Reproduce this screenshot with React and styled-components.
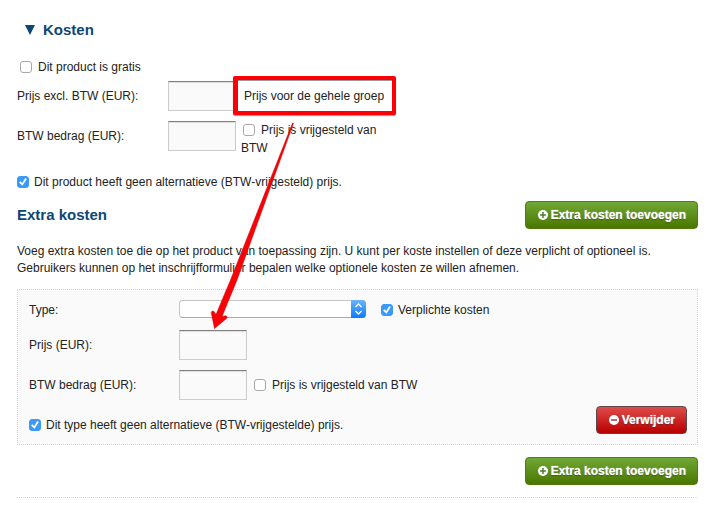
import React from "react";
import styled, { createGlobalStyle } from "styled-components";

const GlobalStyle = createGlobalStyle`
  * {
    box-sizing: border-box;
  }

  body {
    margin: 0;
    background-color: #ffffff;
    color: #222222;
    font-family: "Liberation Sans", Arial, sans-serif;
    font-size: 12px;
    line-height: 18px;
  }
`;

const Page = styled.main`
  position: relative;
  padding: 20px 29px 0 17px;
`;

const Title = styled.h2`
  display: flex;
  align-items: center;
  gap: 8px;
  margin: 0 0 18px;
  padding-left: 8px;
  color: #0d4775;
  font-size: 15px;
  line-height: 20px;
`;

const Subtitle = styled(Title)`
  margin: 0;
  padding-left: 0;
`;

const Rows = styled.div`
  display: flex;
  flex-direction: column;
  gap: 10px;
  padding: ${(props) => (props.$inset ? "10px 0 6px" : "5px 0 16px")};
`;

const Row = styled.div`
  position: relative;
  display: flex;
  align-items: flex-start;
`;

const RowLabel = styled.label`
  flex: none;
  width: ${(props) => (props.$inset ? "150px" : "151px")};
  line-height: ${(props) => (props.$short ? "20px" : "30px")};
`;

const PriceInput = styled.input`
  flex: none;
  width: 68px;
  height: 30px;
  padding: 4px;
  background-color: #fafafa;
  border: 1px solid #cccccc;
  border-top-color: #808080;
  border-radius: 0;
  box-shadow: inset 0 1px 1px #dddddd;
  font: inherit;
`;

const Check = styled.input`
  appearance: none;
  position: relative;
  flex: none;
  width: 12px;
  height: 12px;
  margin: 0;
  background-color: #ffffff;
  border: 1px solid #a9a9a9;
  border-radius: 3px;
  vertical-align: -2px;

  &:checked {
    background-color: #3b99fc;
    border-color: #3b99fc;
  }

  &:checked::after {
    content: "";
    position: absolute;
    inset: 1px;
    background-color: #ffffff;
    clip-path: polygon(0 55%, 18% 40%, 40% 64%, 78% 0, 98% 14%, 44% 98%);
  }
`;

const CheckLabel = styled.label`
  display: flex;
  align-items: center;
  gap: ${(props) => (props.$wide ? "6px" : "5px")};
`;

const CheckRow = styled(CheckLabel)`
  padding: ${(props) => (props.$indent ? "0 3px" : "0")};
`;

const WrapLabel = styled.label`
  width: 160px;
  margin-left: 5px;

  ${Check} {
    margin: 0 6px 0 2px;
  }
`;

const InlineCheck = styled(CheckLabel)`
  height: ${(props) => (props.$short ? "20px" : "30px")};
  margin-left: ${(props) => (props.$short ? "15px" : "7px")};
`;

const Highlight = styled.div`
  position: absolute;
  top: -5px;
  left: 216px;
  padding: 8px 8px 7px 6px;
  background-color: #ffffff;
  border: 4px solid #fb0007;
  border-left-width: 5px;
  border-radius: 2px;
  box-shadow: inset 0 1px 0 #999999, 0 1px 1px #999999;
  line-height: 16px;
  white-space: nowrap;
`;

const Bar = styled.div`
  display: flex;
  justify-content: ${(props) => (props.$end ? "flex-end" : "space-between")};
  align-items: center;
  padding: ${(props) => (props.$end ? "12px 0" : "10px 0 14px")};
`;

const Button = styled.button`
  display: flex;
  align-items: center;
  gap: 3px;
  height: 28px;
  padding: 0 11px 0 12px;
  background: linear-gradient(#71a836, #4a7600);
  border: 1px solid #4f7d08;
  border-radius: 4px;
  color: #ffffff;
  cursor: pointer;
  font: bold 12px "Liberation Sans", Arial, sans-serif;
  text-shadow: 0 1px 1px rgba(0, 0, 0, 0.4), 0 0 1px #ffffff;
  white-space: nowrap;
`;

const DeleteButton = styled(Button)`
  background: linear-gradient(#df4b4b, #b80000);
  border-color: #5a4848;
`;

const Intro = styled.p`
  margin: 0;
  line-height: 17px;
`;

const Panel = styled.section`
  margin-top: 12px;
  padding: 10px 10px 10px 11px;
  background-color: #fafafa;
  border: 1px dotted #ccd6dd;
`;

const PanelFooter = styled.div`
  display: flex;
  justify-content: space-between;
  align-items: flex-end;

  ${CheckLabel} {
    height: 18px;
  }
`;

const SelectWrap = styled.div`
  position: relative;
  flex: none;
  width: 187px;
  height: 18px;
`;

const Select = styled.select`
  appearance: none;
  display: block;
  width: 100%;
  height: 100%;
  padding: 0 20px 0 6px;
  background-color: #ffffff;
  border: 1px solid #c6c6c6;
  border-bottom-color: #a9a9a9;
  border-radius: 4px;
  font: inherit;
`;

const SelectArrows = styled.svg`
  position: absolute;
  top: 0;
  right: 0;
  width: 15px;
  height: 18px;
  background: linear-gradient(#6bb3fa, #0a7bff);
  border-radius: 0 4px 4px 0;
  pointer-events: none;
`;

const Divider = styled.hr`
  margin: 0;
  border: 0;
  border-top: 1px dotted #ccd6dd;
`;

const Arrow = styled.svg`
  position: absolute;
  top: 122px;
  left: 208px;
  width: 90px;
  height: 210px;
  pointer-events: none;
`;

const Triangle = () => (
  <svg width="10" height="10" viewBox="0 0 10 10" fill="#0d4775">
    <path d="M0 0h10L5 10z" />
  </svg>
);

const CircleIcon = ({ minus }) => (
  <svg width="10" height="12" viewBox="0 0 10 12">
    <circle cx="5" cy="6" r="5" fill="#ffffff" />
    <path
      d={minus ? "M2 6h6" : "M2 6h6M5 3v6"}
      stroke={minus ? "#a83a48" : "#4d7f2e"}
      strokeWidth="1.5"
    />
  </svg>
);

const AddButton = () => (
  <Button type="button">
    <CircleIcon />
    Extra kosten toevoegen
  </Button>
);

const ExtraCost = () => (
  <Panel>
    <Row>
      <RowLabel htmlFor="type" $inset $short>
        Type:
      </RowLabel>
      <SelectWrap>
        <Select id="type" />
        <SelectArrows viewBox="0 0 15 18">
          <path
            d="M4.5 7l3-3 3 3M4.5 11l3 3 3-3"
            fill="none"
            stroke="#ffffff"
            strokeWidth="1.4"
          />
        </SelectArrows>
      </SelectWrap>
      <InlineCheck $short>
        <Check type="checkbox" defaultChecked />
        Verplichte kosten
      </InlineCheck>
    </Row>
    <Rows $inset>
      <Row>
        <RowLabel htmlFor="extra-price" $inset>
          Prijs (EUR):
        </RowLabel>
        <PriceInput id="extra-price" type="text" />
      </Row>
      <Row>
        <RowLabel htmlFor="extra-vat" $inset>
          BTW bedrag (EUR):
        </RowLabel>
        <PriceInput id="extra-vat" type="text" />
        <InlineCheck $wide>
          <Check type="checkbox" />
          Prijs is vrijgesteld van BTW
        </InlineCheck>
      </Row>
    </Rows>
    <PanelFooter>
      <CheckLabel>
        <Check type="checkbox" defaultChecked />
        Dit type heeft geen alternatieve (BTW-vrijgestelde) prijs.
      </CheckLabel>
      <DeleteButton type="button">
        <CircleIcon minus />
        Verwijder
      </DeleteButton>
    </PanelFooter>
  </Panel>
);

const App = () => {
  return (
    <>
      <GlobalStyle />
      <Page>
        <Title>
          <Triangle />
          Kosten
        </Title>
        <CheckRow $indent $wide>
          <Check type="checkbox" />
          Dit product is gratis
        </CheckRow>
        <Rows>
          <Row>
            <RowLabel htmlFor="price">Prijs excl. BTW (EUR):</RowLabel>
            <PriceInput id="price" type="text" />
            <Highlight>Prijs voor de gehele groep</Highlight>
          </Row>
          <Row>
            <RowLabel htmlFor="vat">BTW bedrag (EUR):</RowLabel>
            <PriceInput id="vat" type="text" />
            <WrapLabel>
              <Check type="checkbox" />
              Prijs is vrijgesteld van BTW
            </WrapLabel>
          </Row>
        </Rows>
        <CheckRow>
          <Check type="checkbox" defaultChecked />
          Dit product heeft geen alternatieve (BTW-vrijgesteld) prijs.
        </CheckRow>
        <Bar>
          <Subtitle>Extra kosten</Subtitle>
          <AddButton />
        </Bar>
        <Intro>
          Voeg extra kosten toe die op het product van toepassing zijn. U kunt
          per koste instellen of deze verplicht of optioneel is. Gebruikers
          kunnen op het inschrijfformulier bepalen welke optionele kosten ze
          willen afnemen.
        </Intro>
        <ExtraCost />
        <Bar $end>
          <AddButton />
        </Bar>
        <Divider />
        <Arrow viewBox="0 0 90 210">
          <path
            d="M84.5 1L85.5 1.3L29 158L14 194.5L17.5 193.7Q20 194.500 18.500 196.500L6.500 206.500L3.200 190.500Q4 188 6 189.500L8 192.500L22.5 158Z"
            fill="#fb0007"
            stroke="#c00006"
            strokeWidth="0.5"
          />
        </Arrow>
      </Page>
    </>
  );
};

export default App;
